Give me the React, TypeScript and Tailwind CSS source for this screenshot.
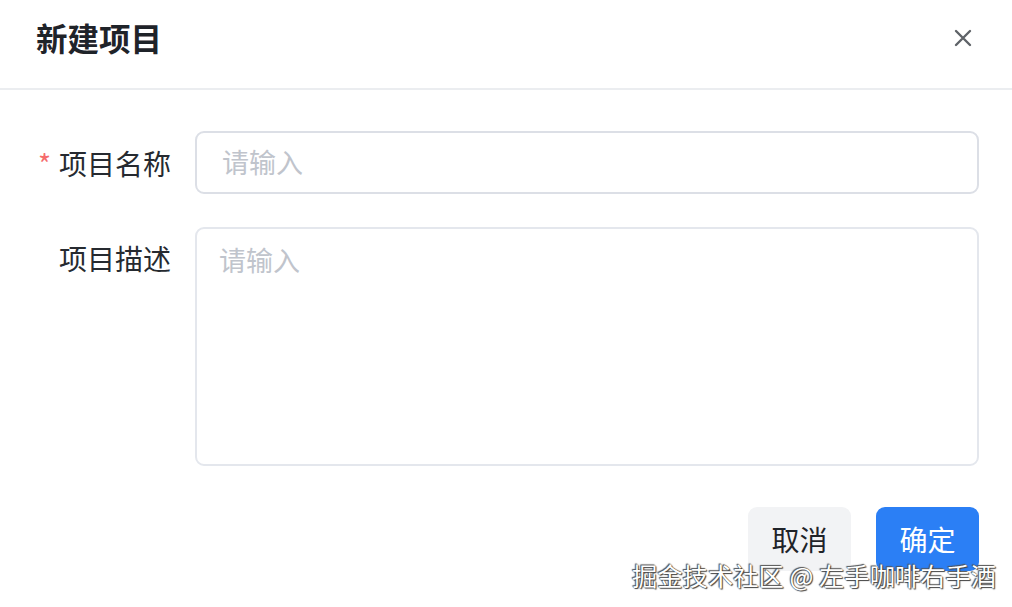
import React from "react";

export default function App() {
  return (
    <div
      className="relative w-[1012px] h-[607px] overflow-hidden bg-white text-[#1f2329]"
      style={{ fontFamily: '"Noto Sans CJK SC", "Noto Sans", sans-serif' }}
    >
      <div className="flex h-[90px] items-center justify-between border-b-2 border-[#ebedf0] pl-[36px] pr-[38px]">
        <div className="text-[31.5px] font-bold leading-none pb-[12px]">新建项目</div>
        <button className="mb-[12px] flex h-[22px] w-[22px] items-center justify-center text-[#5f6368]">
          <svg width="18" height="18" viewBox="0 0 18 18" fill="none" stroke="currentColor" strokeWidth="2.4" strokeLinecap="round">
            <path d="M2 2 L16 16 M16 2 L2 16" />
          </svg>
        </button>
      </div>

      <div className="flex flex-col pt-[41px] pr-[33px]">
        <div className="flex items-center">
          <div className="w-[171px] shrink-0 text-right text-[28px] leading-none text-[#262a30]">
            <span className="mr-[8px] text-[#f56c6c]">*</span>项目名称
          </div>
          <div className="ml-[24px] flex h-[63px] flex-1 items-center rounded-[9px] border-2 border-[#dcdfe6] pl-[25px] text-[27px] text-[#c0c4cc]">
            请输入
          </div>
        </div>

        <div className="mt-[33px] flex items-start">
          <div className="w-[171px] shrink-0 pt-[17px] text-right text-[28px] leading-none text-[#262a30]">项目描述</div>
          <div className="ml-[24px] h-[239px] flex-1 rounded-[9px] border-2 border-[#e4e7ed] pl-[22px] pt-[17px] text-[27px] leading-none text-[#c0c4cc]">
            请输入
          </div>
        </div>

        <div className="mt-[41px] flex justify-end gap-[25px]">
          <button className="flex h-[64px] w-[103px] items-center justify-center rounded-[9px] bg-[#f2f3f5] text-[28px] text-[#1f2329]">
            取消
          </button>
          <button className="flex h-[64px] w-[103px] items-center justify-center rounded-[9px] bg-[#2b7ff5] text-[28px] text-white">
            确定
          </button>
        </div>
      </div>

      <div
        className="absolute left-[632px] top-[558px] whitespace-nowrap text-[25.3px] leading-[34px] text-white"
        style={{ textShadow: "0 0 1px #333, 1px 1px 1px #444, -1px -1px 1px #555" }}
      >
        掘金技术社区 @ 左手咖啡右手酒
      </div>
    </div>
  );
}
